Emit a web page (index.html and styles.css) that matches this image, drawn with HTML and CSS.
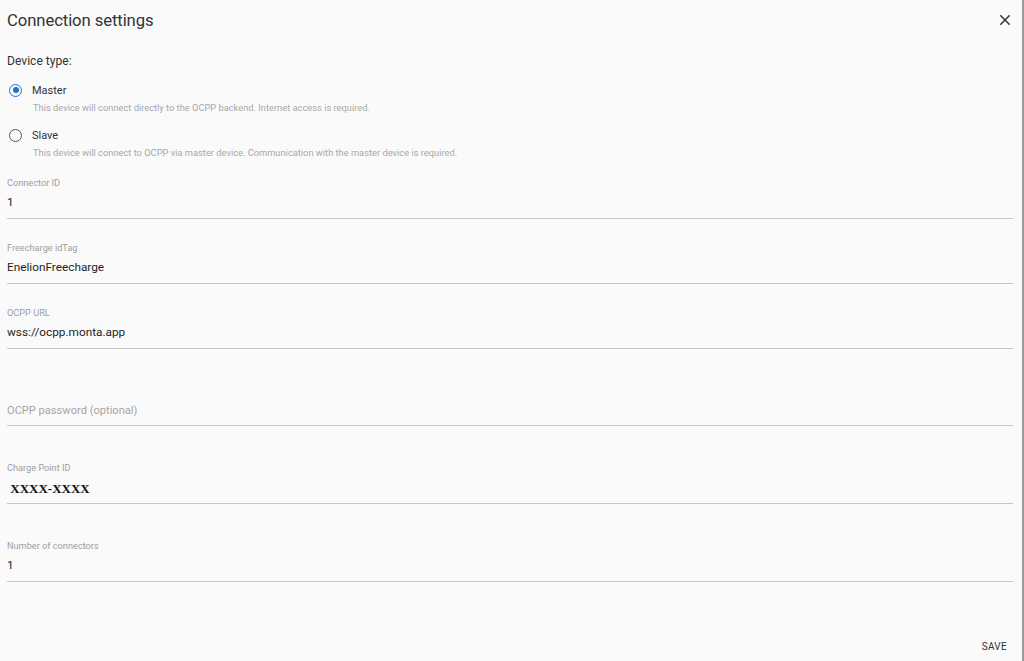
FILE: index.html
```html
<!DOCTYPE html>
<html lang="en">
<head>
<meta charset="utf-8">
<title>Connection settings</title>
<link rel="stylesheet" href="styles.css">
</head>
<body>
<div class="dialog">
  <header class="header">
    <h1 class="title">Connection settings</h1>
    <button class="close" aria-label="Close">
      <svg width="10" height="10" viewBox="0 0 10 10"><path d="M0.8 0.8L9.2 9.2M9.2 0.8L0.8 9.2" stroke="#333" stroke-width="1.5" stroke-linecap="square"/></svg>
    </button>
  </header>
  <div class="content">
    <div class="group-label">Device type:</div>
    <div class="radio-option">
      <div class="radio-row">
        <span class="radio checked"><span class="dot"></span></span>
        <span class="radio-label">Master</span>
      </div>
      <div class="radio-desc">This device will connect directly to the OCPP backend. Internet access is required.</div>
    </div>
    <div class="radio-option second">
      <div class="radio-row">
        <span class="radio"></span>
        <span class="radio-label">Slave</span>
      </div>
      <div class="radio-desc">This device will connect to OCPP via master device. Communication with the master device is required.</div>
    </div>

    <div class="field f1">
      <div class="label">Connector ID</div>
      <div class="value">1</div>
    </div>
    <div class="field f2">
      <div class="label">Freecharge idTag</div>
      <div class="value">EnelionFreecharge</div>
    </div>
    <div class="field f3">
      <div class="label">OCPP URL</div>
      <div class="value">wss://ocpp.monta.app</div>
    </div>
    <div class="field f4 empty">
      <div class="label"></div>
      <div class="value placeholder">OCPP password (optional)</div>
    </div>
    <div class="field f5 tight">
      <div class="label">Charge Point ID</div>
      <div class="value serif"> XXXX-XXXX</div>
    </div>
    <div class="field f6">
      <div class="label">Number of connectors</div>
      <div class="value">1</div>
    </div>
  </div>
  <footer class="footer">
    <button class="save">SAVE</button>
  </footer>
</div>
</body>
</html>
```

FILE: styles.css
```css
* { box-sizing: border-box; }
html, body {
  margin: 0;
  padding: 0;
  height: 100%;
  background: #fafafa;
}
body {
  font-family: Roboto, "Liberation Sans", Arial, sans-serif;
  color: #222;
  overflow: hidden;
}
.dialog {
  height: 661px;
  border-right: 2px solid #9a9a9a;
  display: flex;
  flex-direction: column;
}
.header {
  height: 40px;
  display: flex;
  align-items: center;
  justify-content: space-between;
  padding: 0 12px 0 7px;
}
.title {
  margin: 0;
  font-size: 16.7px;
  font-weight: 400;
  color: #333;
  letter-spacing: -0.1px;
}
.close {
  border: 0;
  background: transparent;
  padding: 0;
  width: 10px;
  height: 10px;
  display: flex;
}
.content {
  padding: 0 9px 0 7px;
}
.group-label {
  margin-top: 13px;
  font-size: 12.1px;
  line-height: 16px;
  color: #333;
}
.radio-option {
  margin-top: 13px;
}
.radio-option.second {
  margin-top: 13px;
}
.radio-row {
  display: flex;
  align-items: center;
  height: 16px;
}
.radio {
  width: 13px;
  height: 13px;
  border: 1.5px solid #555;
  border-radius: 50%;
  margin-left: 2px;
  display: flex;
  align-items: center;
  justify-content: center;
}
.radio.checked {
  border-color: #1976d2;
}
.radio .dot {
  width: 6px;
  height: 6px;
  border-radius: 50%;
  background: #1976d2;
}
.radio-label {
  margin-left: 10px;
  font-size: 11px;
  color: #333;
}
.radio-desc {
  margin: 4px 0 0 26px;
  font-size: 9.3px;
  line-height: 12px;
  color: #a8a8a8;
}
.field {
  margin-top: 24px;
  padding-bottom: 7px;
  border-bottom: 1px solid #c6c6c6;
}
.field.f1 { margin-top: 18px; }
.field.f2 { margin-top: 23px; }
.field.f3 { margin-top: 23px; }
.field.f4 { margin-top: 35px; }
.field.f5 { margin-top: 36px; }
.field.f6 { margin-top: 36px; }
.label {
  height: 12px;
  font-size: 9.2px;
  line-height: 12px;
  color: #9e9e9e;
}
.value {
  margin-top: 4px;
  height: 18px;
  font-size: 11.8px;
  line-height: 18px;
  color: #1e1e1e;
}
.field.empty .value,
.field.tight .value {
  margin-top: 6px;
}
.field.empty,
.field.tight {
  padding-bottom: 5px;
}
.value.placeholder {
  color: #a5a5a5;
  font-size: 11.1px;
}
.value.serif {
  font-family: "Liberation Serif", "Times New Roman", serif;
  font-weight: 700;
  font-size: 13px;
  white-space: pre;
  color: #111;
}
.footer {
  margin-top: auto;
  display: flex;
  justify-content: flex-end;
  padding: 0 15px 4px 0;
}
.save {
  border: 0;
  background: transparent;
  font-family: Roboto, "Liberation Sans", Arial, sans-serif;
  font-size: 10px;
  font-weight: 400;
  letter-spacing: 0.3px;
  color: #333;
  padding: 0;
  height: 20px;
  line-height: 20px;
}
```
